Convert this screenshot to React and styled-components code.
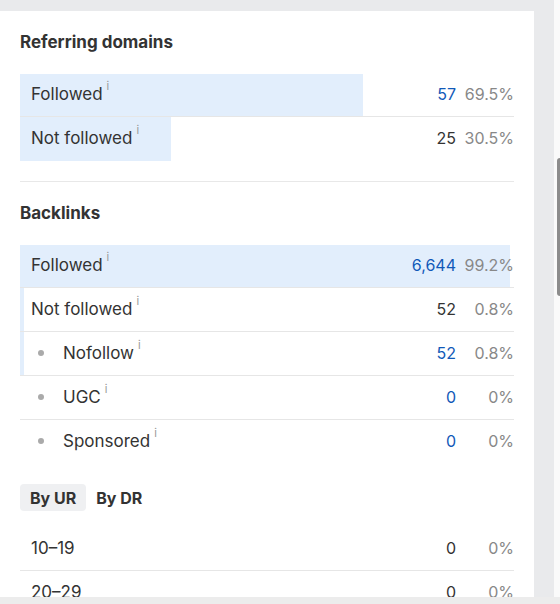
import React from "react";
import styled, { createGlobalStyle } from "styled-components";

const GlobalStyle = createGlobalStyle`
  html, body {
    margin: 0;
    padding: 0;
    overflow: hidden;
  }
  body {
    font-family: Inter, "Noto Sans", "Liberation Sans", sans-serif;
    color: #333;
  }
  * {
    box-sizing: border-box;
  }
`;

const referring = [
  { label: "Followed", value: "57", pct: 69.5, link: true },
  { label: "Not followed", value: "25", pct: 30.5 }
];

const backlinks = [
  { label: "Followed", value: "6,644", pct: 99.2, link: true },
  { label: "Not followed", value: "52", pct: 0.8 },
  { label: "Nofollow", value: "52", pct: 0.8, link: true, nested: true },
  { label: "UGC", value: "0", pct: 0, link: true, nested: true },
  { label: "Sponsored", value: "0", pct: 0, link: true, nested: true }
];

const ranges = [
  { label: "10–19", value: "0", pct: 0 },
  { label: "20–29", value: "0", pct: 0 }
];

function formatPct(p) {
  return p === 0 ? "0%" : `${p}%`;
}

function StatRow({ row, info = true, bar = true }) {
  return (
    <Row>
      {bar && row.pct > 0 && <Bar style={{ width: `${row.pct}%` }} />}
      <Label nested={row.nested}>
        {row.nested && <Dot />}
        {row.label}
        {info && <Info>i</Info>}
      </Label>
      <Num link={row.link}>{row.value}</Num>
      <Pct>{formatPct(row.pct)}</Pct>
    </Row>
  );
}

export default function App() {
  return (
    <>
      <GlobalStyle />
      <Screen>
        <Viewport>
          <Page>
            <Card>
              <Section>
                <Title>Referring domains</Title>
                <Table compactFirst>
                  {referring.map((r) => (
                    <StatRow key={r.label} row={r} />
                  ))}
                </Table>
              </Section>
              <Divider />
              <Section>
                <Title>Backlinks</Title>
                <Table compactFirst>
                  {backlinks.map((r) => (
                    <StatRow key={r.label} row={r} />
                  ))}
                </Table>
              </Section>
              <Tabs>
                <Tab active>By UR</Tab>
                <Tab>By DR</Tab>
              </Tabs>
              <Table>
                {ranges.map((r) => (
                  <StatRow key={r.label} row={r} info={false} bar={false} />
                ))}
              </Table>
            </Card>
          </Page>
          <Track>
            <Thumb />
          </Track>
        </Viewport>
        <BottomBand />
      </Screen>
    </>
  );
}

const Screen = styled.div`
  width: 560px;
  height: 604px;
  display: flex;
  flex-direction: column;
`;

const Viewport = styled.div`
  display: flex;
  height: 597px;
`;

const Page = styled.div`
  width: 554px;
  background: #e9eaec;
  padding: 11px 20px 0 0;
  display: flex;
`;

const Card = styled.div`
  flex: 1;
  background: #fff;
  padding: 19px 20px 0 20px;
  overflow: hidden;
`;

const Track = styled.div`
  width: 6px;
  background: #fafafa;
  padding-top: 158px;
  display: flex;
  justify-content: flex-end;
`;

const Thumb = styled.div`
  width: 3px;
  height: 138px;
  background: #8c8c8c;
  border-radius: 3px 0 0 3px;
`;

const BottomBand = styled.div`
  height: 7px;
  background: #ececec;
`;

const Section = styled.section`
  display: flex;
  flex-direction: column;
`;

const Title = styled.h2`
  margin: 0 0 20px;
  font-size: 17px;
  line-height: 24px;
  font-weight: 700;
  color: #333;
`;

const Divider = styled.hr`
  border: 0;
  border-top: 1px solid #e8e8e8;
  margin: 20px 0 19px;
`;

const Table = styled.div`
  display: flex;
  flex-direction: column;

  ${(p) =>
    p.compactFirst &&
    `
    & > div:first-child {
      height: 43px;
    }
  `}
`;

const Row = styled.div`
  position: relative;
  display: flex;
  align-items: center;
  height: 44px;
  padding-bottom: 2px;
  border-bottom: 1px solid #e6e6e6;
  font-size: 16px;

  &:last-child {
    border-bottom: 0;
  }
`;

const Bar = styled.div`
  position: absolute;
  left: 0;
  top: 0;
  bottom: 0;
  background: #e2eefc;
  z-index: 0;
`;

const Label = styled.div`
  position: relative;
  z-index: 1;
  flex: 1;
  display: flex;
  align-items: center;
  padding-left: ${(p) => (p.nested ? "18px" : "11px")};
  font-size: 17px;
  color: #333;
`;

const Dot = styled.span`
  width: 6px;
  height: 6px;
  border-radius: 50%;
  background: #aaa;
  margin-right: 19px;
`;

const Info = styled.sup`
  font-size: 11px;
  color: #999;
  margin-left: 4px;
  align-self: flex-start;
  line-height: 1;
  margin-top: -3px;
`;

const Num = styled.div`
  position: relative;
  z-index: 1;
  color: ${(p) => (p.link ? "#1159b8" : "#333")};
`;

const Pct = styled.div`
  position: relative;
  z-index: 1;
  width: 58px;
  text-align: right;
  color: #888;
`;

const Tabs = styled.div`
  display: flex;
  margin: 20px 0 16px;
`;

const Tab = styled.div`
  height: 27px;
  display: flex;
  align-items: center;
  padding: 0 10px;
  border-radius: 4px;
  font-size: 16px;
  font-weight: 700;
  color: #333;
  background: ${(p) => (p.active ? "#eff0f2" : "transparent")};
`;
